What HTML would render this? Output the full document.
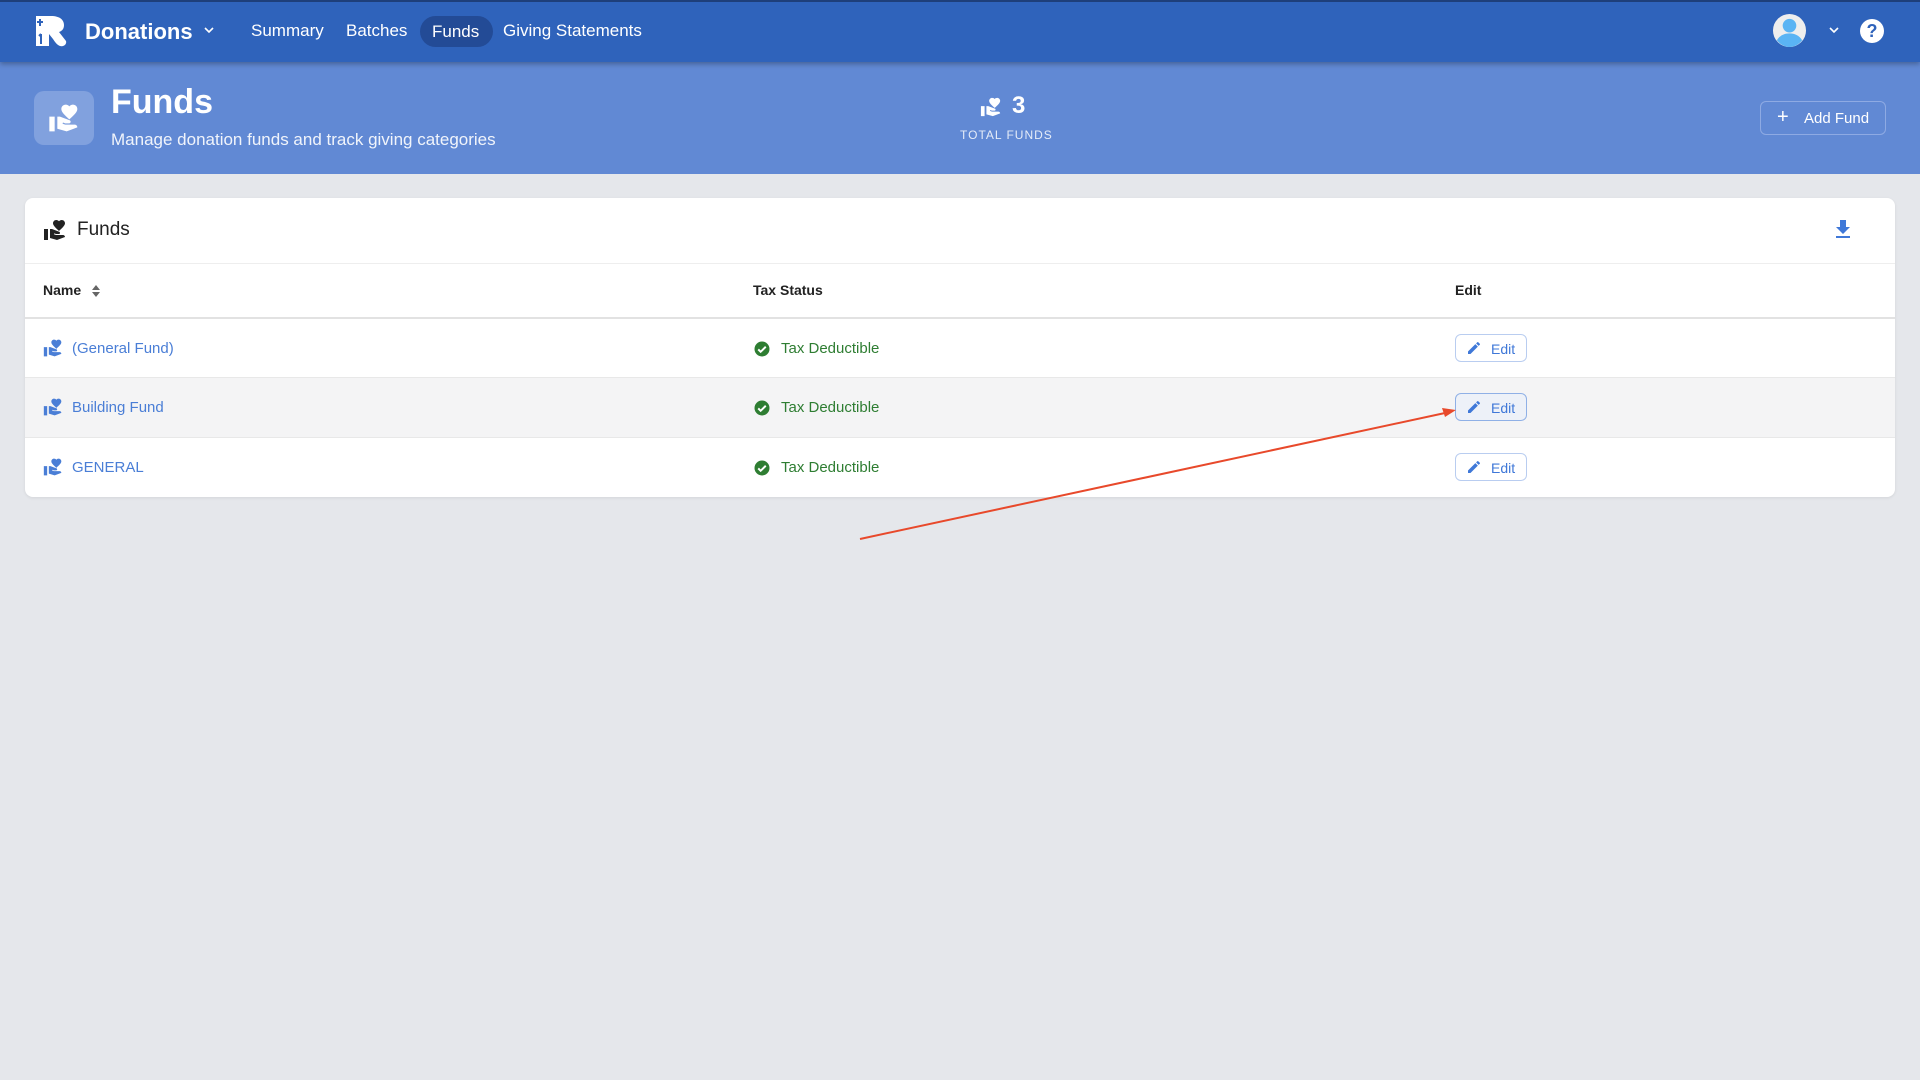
<!DOCTYPE html>
<html><head><meta charset="utf-8"><style>
*{box-sizing:border-box;margin:0;padding:0}
body{width:1920px;height:1080px;background:#e5e7eb;font-family:"Liberation Sans",sans-serif;position:relative;overflow:hidden}
.nav{position:absolute;left:0;top:0;width:1920px;height:62px;background:#2f63bb;box-shadow:0 2px 5px rgba(0,0,0,.3);z-index:2;border-top:2px solid #1e3f7a}
.nav .t{position:absolute;color:#fff;font-size:17px;top:19px}
.hdr{position:absolute;left:0;top:62px;width:1920px;height:112px;background:#6189d4}
.card{position:absolute;left:25px;top:198px;width:1870px;height:299px;background:#fff;border-radius:8px;box-shadow:0 1px 3px rgba(0,0,0,.08);overflow:hidden}
.row{position:absolute;left:0;width:100%;height:60px;border-top:1px solid #e8e8e8}
.lnk{position:absolute;left:47px;top:21px;color:#4a7ed6;font-size:15px}
.ico{position:absolute;left:18px;top:19px}
.tax{position:absolute;left:728px;top:21px;color:#2e7d32;font-size:15px}
.tax svg{position:absolute;left:0;top:0}
.tax span{position:absolute;left:28px;top:0;white-space:nowrap}
.eb{position:absolute;left:1430px;top:15px;width:72px;height:28px;border:1px solid #b9cdf0;border-radius:6px;color:#3f78d8;font-size:14px}
.eb svg{position:absolute;left:10px;top:5px}
.eb span{position:absolute;left:35px;top:6px}
</style></head><body>
<svg width="0" height="0" style="position:absolute"><defs><symbol id="hh" viewBox="0 0 24 24"><path d="M1 11h4v11H1zm15-7.75C16.65 2.49 17.66 2 18.7 2 20.550 2 22 3.45 22 5.3c0 2.27-2.91 4.83-6 7.7-3.09-2.87-6-5.43-6-7.7C10 3.45 11.45 2 13.3 2c1.04 0 2.05.49 2.7 1.25zM20 17h-7l-2.09-.73.33-.94L13 16h2.82c.65 0 1.18-.53 1.18-1.18 0-.49-.31-.93-.77-1.110L8.97 11H7v9.02L14 22l8-3c-.01-1.1-.89-2-2-2z"/></symbol>
<symbol id="pen" viewBox="0 0 24 24"><path d="M3 17.25V21h3.75L17.81 9.94l-3.75-3.75L3 17.25zM20.71 7.04a1 1 0 000-1.41l-2.34-2.34a1 1 0 00-1.41 0l-1.83 1.83 3.75 3.75 1.83-1.83z"/></symbol>
<symbol id="chk" viewBox="0 0 24 24"><circle cx="12" cy="12" r="10" fill="#2e7d32"/><path d="M7 12.5l3.2 3.2L17 9" stroke="#fff" stroke-width="2.6" fill="none"/></symbol></defs></svg>

<div class="nav">
 <svg style="position:absolute;left:33px;top:12px" width="36" height="34" viewBox="0 0 36 34"><path d="M3 2h15c9 0 13 4 13 9 0 4-2 6-5 7l7 9c1 3-2 6-6 5-3-1-5-4-7-7l-4-5v12H3z" fill="#fff"/><path d="M7 5v7M4 8h6M8 20v10M6 22l2-2" stroke="#2f63bb" stroke-width="2"/></svg>
 <div class="t" style="left:85px;top:17px;font-size:22px;font-weight:bold">Donations</div>
 <svg style="position:absolute;left:203px;top:23px" width="12" height="10" viewBox="0 0 12 10"><path d="M2 3l4 4 4-4" stroke="#fff" stroke-width="1.6" fill="none"/></svg>
 <div class="t" style="left:251px">Summary</div>
 <div class="t" style="left:346px">Batches</div>
 <div style="position:absolute;left:420px;top:14px;width:73px;height:31px;border-radius:16px;background:#234b96"></div>
 <div class="t" style="left:432px;top:20px">Funds</div>
 <div class="t" style="left:503px">Giving Statements</div>
 <svg style="position:absolute;left:1772px;top:11px" width="35" height="35" viewBox="0 0 36 36"><circle cx="18" cy="18" r="17" fill="#eee"/><circle cx="18" cy="13" r="7" fill="#5ab4f4"/><path d="M5 28c3-5 8-7 13-7s10 2 13 7c-3 4-8 7-13 7s-10-3-13-7z" fill="#5ab4f4"/></svg>
 <svg style="position:absolute;left:1828px;top:23px" width="12" height="10" viewBox="0 0 12 10"><path d="M2 3l4 4 4-4" stroke="#fff" stroke-width="1.6" fill="none"/></svg>
 <div style="position:absolute;left:1860px;top:17px;width:24px;height:24px;border-radius:50%;background:#fff;color:#2f63bb;font-weight:bold;font-size:18px;text-align:center;line-height:24px">?</div>
</div>

<div class="hdr">
 <div style="position:absolute;left:34px;top:29px;width:60px;height:54px;border-radius:10px;background:#81a1de"></div>
 <svg style="position:absolute;left:48px;top:40px" width="32" height="32" fill="#fff"><use href="#hh"/></svg>
 <div style="position:absolute;left:111px;top:21px;color:#fff;font-size:34px;font-weight:bold">Funds</div>
 <div style="position:absolute;left:111px;top:68px;color:#f0f4fb;font-size:17px">Manage donation funds and track giving categories</div>
 <svg style="position:absolute;left:980px;top:34px" width="22" height="22" fill="#fff"><use href="#hh"/></svg>
 <div style="position:absolute;left:1012px;top:30px;color:#fff;font-size:24px;font-weight:bold">3</div>
 <div style="position:absolute;left:960px;top:66px;color:#e5ecf8;font-size:12px;letter-spacing:1px">TOTAL FUNDS</div>
 <div style="position:absolute;left:1760px;top:39px;width:126px;height:34px;border:1px solid #8eaae3;border-radius:6px;color:#fff;font-size:15px"><span style="position:absolute;left:16px;top:4px;font-size:20px">+</span><span style="position:absolute;left:43px;top:8px">Add Fund</span></div>
</div>

<div class="card">
 <svg style="position:absolute;left:18px;top:20px" width="24" height="24" fill="#222"><use href="#hh"/></svg>
 <div style="position:absolute;left:52px;top:21px;font-size:19px;color:#222">Funds</div>
 <svg style="position:absolute;left:1810px;top:21px" width="16" height="20" viewBox="0 0 16 20" fill="#3f78d8"><path d="M5 1h6v7h4l-7 7-7-7h4z"/><rect x="1" y="17" width="14" height="2"/></svg>
 <div class="row" style="top:65px;height:54px;border-top:1px solid #eee">
  <div style="position:absolute;left:18px;top:18px;font-size:14px;font-weight:bold;color:#222">Name</div>
  <svg style="position:absolute;left:66px;top:20px" width="10" height="14" viewBox="0 0 10 14" fill="#666"><path d="M5 1l4 5H1zM5 13l4-5H1z"/></svg>
  <div style="position:absolute;left:728px;top:18px;font-size:14px;font-weight:bold;color:#222">Tax Status</div>
  <div style="position:absolute;left:1430px;top:18px;font-size:14px;font-weight:bold;color:#222">Edit</div>
 </div>
 <div class="row" style="top:119px;border-top:2px solid #e2e2e2">
  <svg class="ico" width="20" height="20" fill="#4a7ed6"><use href="#hh"/></svg><div class="lnk">(General Fund)</div>
  <div class="tax"><svg width="18" height="18"><use href="#chk"/></svg><span>Tax Deductible</span></div>
  <div class="eb"><svg width="16" height="16" fill="#3f78d8"><use href="#pen"/></svg><span>Edit</span></div>
 </div>
 <div class="row" style="top:179px;background:#f4f4f5">
  <svg class="ico" width="20" height="20" fill="#4a7ed6"><use href="#hh"/></svg><div class="lnk">Building Fund</div>
  <div class="tax"><svg width="18" height="18"><use href="#chk"/></svg><span>Tax Deductible</span></div>
  <div class="eb" style="background:#edf1f8;border-color:#8fb0e6"><svg width="16" height="16" fill="#3f78d8"><use href="#pen"/></svg><span>Edit</span></div>
 </div>
 <div class="row" style="top:239px">
  <svg class="ico" width="20" height="20" fill="#4a7ed6"><use href="#hh"/></svg><div class="lnk">GENERAL</div>
  <div class="tax"><svg width="18" height="18"><use href="#chk"/></svg><span>Tax Deductible</span></div>
  <div class="eb"><svg width="16" height="16" fill="#3f78d8"><use href="#pen"/></svg><span>Edit</span></div>
 </div>
</div>

<svg style="position:absolute;left:0;top:0" width="1920" height="1080"><line x1="860" y1="539" x2="1445" y2="413" stroke="#e8492b" stroke-width="2"/><path d="M1456 410l-14-2 3 9z" fill="#e8492b"/></svg>
</body></html>
